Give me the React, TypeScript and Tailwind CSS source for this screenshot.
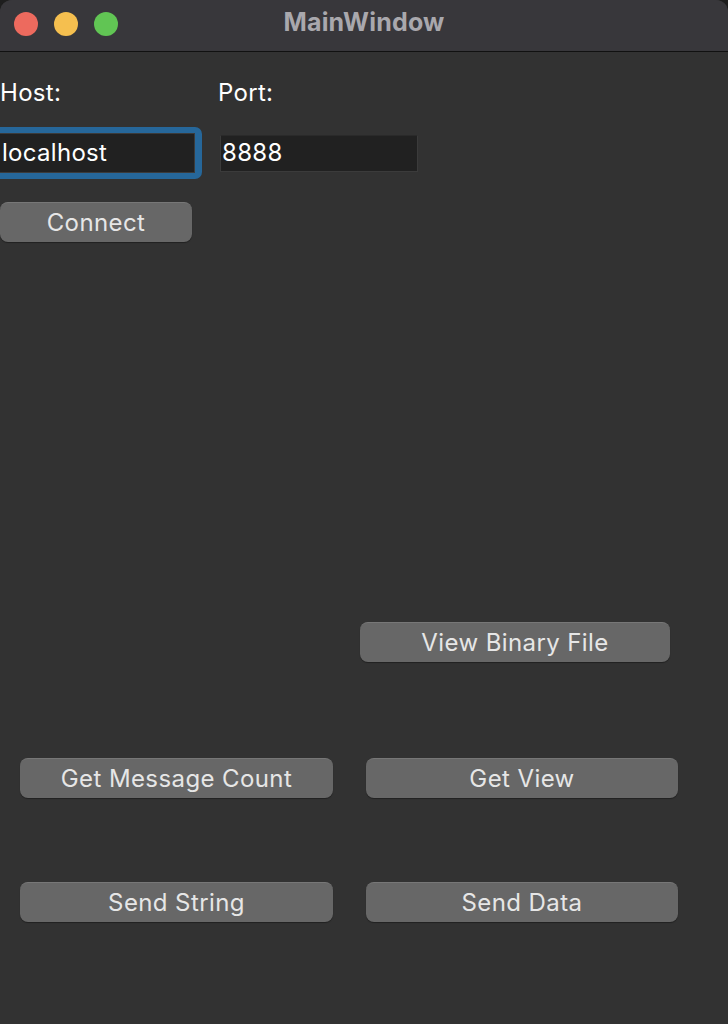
const btn =
  "h-[40px] rounded-[8px] bg-[#676767] text-[#e6e6e6] text-[24px] tracking-[0.4px] leading-none shadow-[0_1px_1px_rgba(0,0,0,0.35)] border-t border-[#777]";

export default function App() {
  const font = { fontFamily: "Inter, 'Noto Sans', 'Liberation Sans', sans-serif" };
  return (
    <div className="w-[728px] h-[1024px] bg-[#1e1e1e] overflow-hidden" style={font}>
      <div className="w-full h-full rounded-t-[12px] bg-[#323232] overflow-hidden flex flex-col">
        {/* title bar */}
        <div className="h-[52px] shrink-0 bg-[#38373b] border-b border-[#111] flex items-center relative">
          <div className="flex gap-[16px] pl-[14px] -mt-[4px]">
            <span className="w-[24px] h-[24px] rounded-full bg-[#ed6a5e]" />
            <span className="w-[24px] h-[24px] rounded-full bg-[#f5bf4f]" />
            <span className="w-[24px] h-[24px] rounded-full bg-[#61c554]" />
          </div>
          <div className="absolute inset-0 flex items-center justify-center pb-[6px] text-[25px] font-bold tracking-[0.2px] text-[#a9a8ad] pointer-events-none">
            MainWindow
          </div>
        </div>

        {/* body */}
        <div className="flex flex-col text-[24px] tracking-[0.3px] text-white">
          <div className="flex mt-[28px] h-[26px] items-center">
            <span className="w-[218px]">Host:</span>
            <span>Port:</span>
          </div>
          <div className="flex mt-[21px] items-center">
            <div className="w-[203px] h-[52px] rounded-r-[7px] bg-[#26679a] pr-[7px] py-[6px] -ml-[1px]">
              <div className="h-full bg-[#212121] border border-[#3b3b3b] flex items-center pl-[2px] leading-none">
                localhost
              </div>
            </div>
            <div className="ml-[18px] w-[198px] h-[37px] bg-[#212121] border border-[#3b3b3b] border-t-[#2a2a2a] flex items-center pl-[1px] leading-none">
              8888
            </div>
          </div>
          <button className={`mt-[23px] w-[192px] ${btn}`}>Connect</button>

          <div className="mt-[380px] pl-[360px]">
            <button className={`w-[310px] ${btn}`}>View Binary File</button>
          </div>

          <div className="mt-[96px] flex pl-[20px] gap-[33px]">
            <button className={`w-[313px] ${btn}`}>Get Message Count</button>
            <button className={`w-[312px] ${btn}`}>Get View</button>
          </div>

          <div className="mt-[84px] flex pl-[20px] gap-[33px]">
            <button className={`w-[313px] ${btn}`}>Send String</button>
            <button className={`w-[312px] ${btn}`}>Send Data</button>
          </div>
        </div>
      </div>
    </div>
  );
}
